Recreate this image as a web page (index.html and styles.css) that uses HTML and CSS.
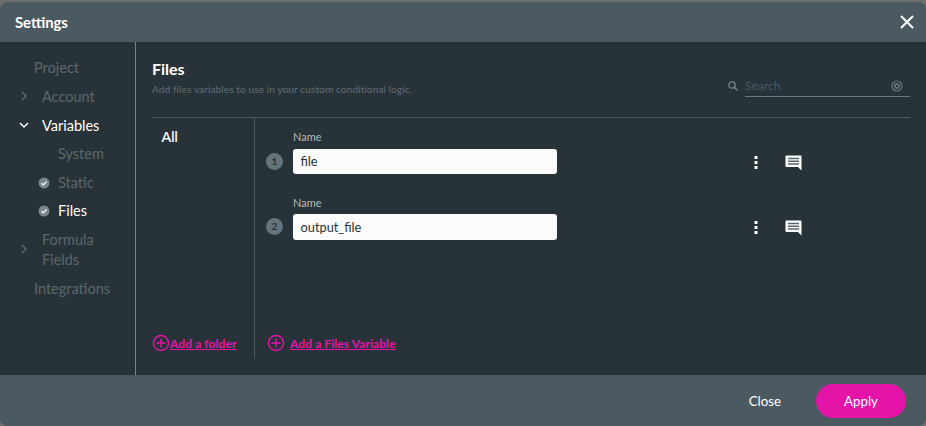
FILE: index.html
```html
<!DOCTYPE html>
<html lang="en">
<head>
  <meta charset="UTF-8">
  <title>Settings</title>
  <link rel="stylesheet" href="styles.css">
</head>
<body>
  <div class="modal">
    <header class="modal-head">
      <span class="modal-title">Settings</span>
      <svg class="close-x" width="16" height="16" viewBox="0 0 16 16"><path d="M2 2l12 12M14 2L2 14" stroke="#fff" stroke-width="2" fill="none"/></svg>
    </header>
    <div class="modal-body">
      <nav class="side">
        <div class="nav-item plain">Project</div>
        <div class="nav-item"><svg class="chev" width="10" height="10" viewBox="0 0 10 10"><path d="M3 1l4 4-4 4" stroke="#5b676d" stroke-width="1.5" fill="none"/></svg>Account</div>
        <div class="nav-item on"><svg class="chev" width="10" height="10" viewBox="0 0 10 10"><path d="M1 3l4 4 4-4" stroke="#fff" stroke-width="1.5" fill="none"/></svg>Variables</div>
        <div class="nav-sub">System</div>
        <div class="nav-sub"><svg class="tick" width="12" height="12" viewBox="0 0 12 12"><circle cx="6" cy="6" r="5.5" fill="#79868c"/><path d="M3.5 6.2l1.8 1.7 3.2-3.4" stroke="#fff" stroke-width="1.2" fill="none"/></svg>Static</div>
        <div class="nav-sub on"><svg class="tick" width="12" height="12" viewBox="0 0 12 12"><circle cx="6" cy="6" r="5.5" fill="#79868c"/><path d="M3.5 6.2l1.8 1.7 3.2-3.4" stroke="#fff" stroke-width="1.2" fill="none"/></svg>Files</div>
        <div class="nav-item two"><svg class="chev" width="10" height="10" viewBox="0 0 10 10"><path d="M3 1l4 4-4 4" stroke="#5b676d" stroke-width="1.5" fill="none"/></svg>Formula<br>Fields</div>
        <div class="nav-item plain">Integrations</div>
      </nav>
      <main class="content">
        <div class="content-top">
          <div>
            <h1>Files</h1>
            <p class="hint">Add files variables to use in your custom conditional logic.</p>
          </div>
          <div class="search">
            <svg width="12" height="12" viewBox="0 0 12 12"><circle cx="5" cy="5" r="3.2" stroke="#79868c" stroke-width="1.3" fill="none"/><path d="M7.5 7.5l3 3" stroke="#79868c" stroke-width="1.5"/></svg>
            <div class="search-box">
              <span>Search</span>
              <svg width="12" height="12" viewBox="0 0 12 12"><circle cx="6" cy="6" r="5" stroke="#6c787e" stroke-width="1.2" fill="none"/><circle cx="6" cy="6" r="3" fill="#6c787e"/><path d="M4.6 4.6l2.8 2.800M7.400 4.600L4.600 7.400" stroke="#283339" stroke-width="1"/></svg>
            </div>
          </div>
        </div>
        <div class="panes">
          <div class="folders">
            <div class="folder-all">All</div>
            <a class="add-link add-folder" href="#"><svg width="18" height="18" viewBox="0 0 18 18"><circle cx="9" cy="9" r="7.500" stroke="#e514a9" stroke-width="1.400" fill="none"/><path d="M9 4.500v9M4.500 9h9" stroke="#e514a9" stroke-width="1.400"/></svg><span>Add a folder</span></a>
          </div>
          <div class="vars">
            <div class="var-row">
              <span class="num">1</span>
              <div class="field">
                <label>Name</label>
                <div class="input">file</div>
              </div>
              <svg class="dots" width="4" height="14" viewBox="0 0 4 14"><path d="M.5 0h3v3h-3zM.5 5h3v3h-3zM.5 10h3v3h-3z" fill="#fff"/></svg>
              <svg class="note" width="17" height="16" viewBox="0 0 17 16"><path d="M1.500 0.500h14a1 1 0 0 1 1 1v14l-3.500-3.500h-11.500a1 1 0 0 1-1-1v-9.500a1 1 0 0 1 1-1z" fill="#fff"/><path d="M3 3.500h11M3 6.300h11M3 9.100h11" stroke="#5a666c" stroke-width="1.500"/></svg>
            </div>
            <div class="var-row">
              <span class="num">2</span>
              <div class="field">
                <label>Name</label>
                <div class="input">output_file</div>
              </div>
              <svg class="dots" width="4" height="14" viewBox="0 0 4 14"><path d="M.5 0h3v3h-3zM.5 5h3v3h-3zM.5 10h3v3h-3z" fill="#fff"/></svg>
              <svg class="note" width="17" height="16" viewBox="0 0 17 16"><path d="M1.500 0.500h14a1 1 0 0 1 1 1v14l-3.500-3.500h-11.500a1 1 0 0 1-1-1v-9.500a1 1 0 0 1 1-1z" fill="#fff"/><path d="M3 3.500h11M3 6.300h11M3 9.100h11" stroke="#5a666c" stroke-width="1.500"/></svg>
            </div>
            <a class="add-link add-var" href="#"><svg width="18" height="18" viewBox="0 0 18 18"><circle cx="9" cy="9" r="7.500" stroke="#e514a9" stroke-width="1.400" fill="none"/><path d="M9 4.500v9M4.500 9h9" stroke="#e514a9" stroke-width="1.400"/></svg><span>Add a Files Variable</span></a>
          </div>
        </div>
      </main>
    </div>
    <footer class="modal-foot">
      <span class="close-btn">Close</span>
      <span class="apply-btn">Apply</span>
    </footer>
  </div>
</body>
</html>
```

FILE: styles.css
```css
html, body { margin: 0; height: 100%; background: #6e6e6e; overflow: hidden; }
body { font-family: Lato, "Open Sans", sans-serif; color: #fff; padding-top: 2px; box-sizing: border-box; }
.modal { height: 424px; display: flex; flex-direction: column; border-radius: 8px; overflow: hidden; background: #4b5a61; }
.modal-head { height: 40px; flex: none; display: flex; align-items: center; justify-content: space-between; padding: 0 11px 0 15px; background: #4b5a61; }
.modal-title { font-size: 14.800px; font-weight: 700; }
.modal-body { flex: 1; display: flex; background: #283339; min-height: 0; }
.modal-foot { height: 51px; flex: none; display: flex; align-items: center; justify-content: flex-end; padding: 0 20px 0 0; background: #4b5a61; font-size: 13.300px; }
.close-btn { margin-right: 35px; }
.apply-btn { width: 90px; height: 34px; line-height: 34px; text-align: center; border-radius: 17px; background: #e514a9; }

.side { width: 135px; flex: none; border-right: 1px solid #79868c; padding-top: 11px; font-size: 14.500px; color: #5b676d; }
.nav-item { position: relative; padding-left: 42px; height: 29px; line-height: 29px; }
.nav-item.plain { padding-left: 34px; }
.nav-item.two { height: auto; line-height: 20px; padding: 4px 0 4px 42px; }
.nav-item.on, .nav-sub.on { color: #fff; }
.chev { position: absolute; left: 19px; top: 50%; margin-top: -6px; }
.nav-sub { position: relative; padding-left: 58px; height: 28.500px; line-height: 28px; }
.tick { position: absolute; left: 38px; top: 8px; }

.content { flex: 1; padding: 0 16px; display: flex; flex-direction: column; min-width: 0; }
.content-top { height: 75px; flex: none; display: flex; justify-content: space-between; border-bottom: 1px solid #4b5a61; }
h1 { font-size: 16px; font-weight: 700; margin: 18px 0 0; line-height: 18px; }
.hint { font-size: 10.200px; letter-spacing: .05px; color: #5f6c72; margin: 4px 0 0; line-height: 14px; }
.search { width: 183px; display: flex; align-items: flex-start; gap: 6px; padding-top: 33px; box-sizing: border-box; }
.search > svg { margin-top: 5px; flex: none; }
.search-box { flex: 1; height: 21px; display: flex; justify-content: space-between; border-bottom: 1px solid #6c787e; font-size: 12px; color: #4b5a61; line-height: 22px; }
.search-box svg { margin: 5px 7px 0 0; }

.panes { flex: 1; display: flex; padding-bottom: 16px; min-height: 0; }
.folders { width: 102px; flex: none; border-right: 1px solid #4b5a61; display: flex; flex-direction: column; justify-content: space-between; }
.folder-all { font-size: 14.500px; padding: 10px 0 0 9.500px; line-height: 18px; font-family: "Liberation Sans", sans-serif; -webkit-text-stroke: .2px #fff; }
.vars { flex: 1; padding-left: 12px; display: flex; flex-direction: column; }
.var-row { height: 66px; display: flex; align-items: flex-end; }
.var-row:first-child { height: 56px; }
.var-row:first-child .field label { margin-bottom: 5px; }
.num { width: 17px; height: 17px; line-height: 17px; margin: 0 9px 4px -1px; border-radius: 50%; background: #65737a; color: #283339; font-size: 10px; font-weight: 700; text-align: center; flex: none; }
.var-row + .var-row .num { margin-bottom: 5px; }
.field { width: 264px; margin-left: 1px; }
.field label { display: block; font-size: 11px; color: #b4bcbf; line-height: 14px; margin-bottom: 4px; }
.input { height: 25px; line-height: 25px; border-radius: 3px; background: #fbfbfb; color: #283339; font-size: 12.800px; padding-left: 7.500px; }
.var-row + .var-row .input { height: 26px; line-height: 26px; }
.dots { margin: 0 0 4px 197px; flex: none; }
.var-row + .var-row .dots { margin-bottom: 5px; }
.note { margin: 0 0 3px 27px; flex: none; }
.var-row + .var-row .note { margin-bottom: 4px; }
.add-link { display: flex; align-items: center; color: #e514a9; font-size: 12.200px; font-weight: 700; margin-bottom: 7px; }
.add-link span { text-decoration: underline; }
.add-var { margin-top: auto; gap: 5px; }
```
